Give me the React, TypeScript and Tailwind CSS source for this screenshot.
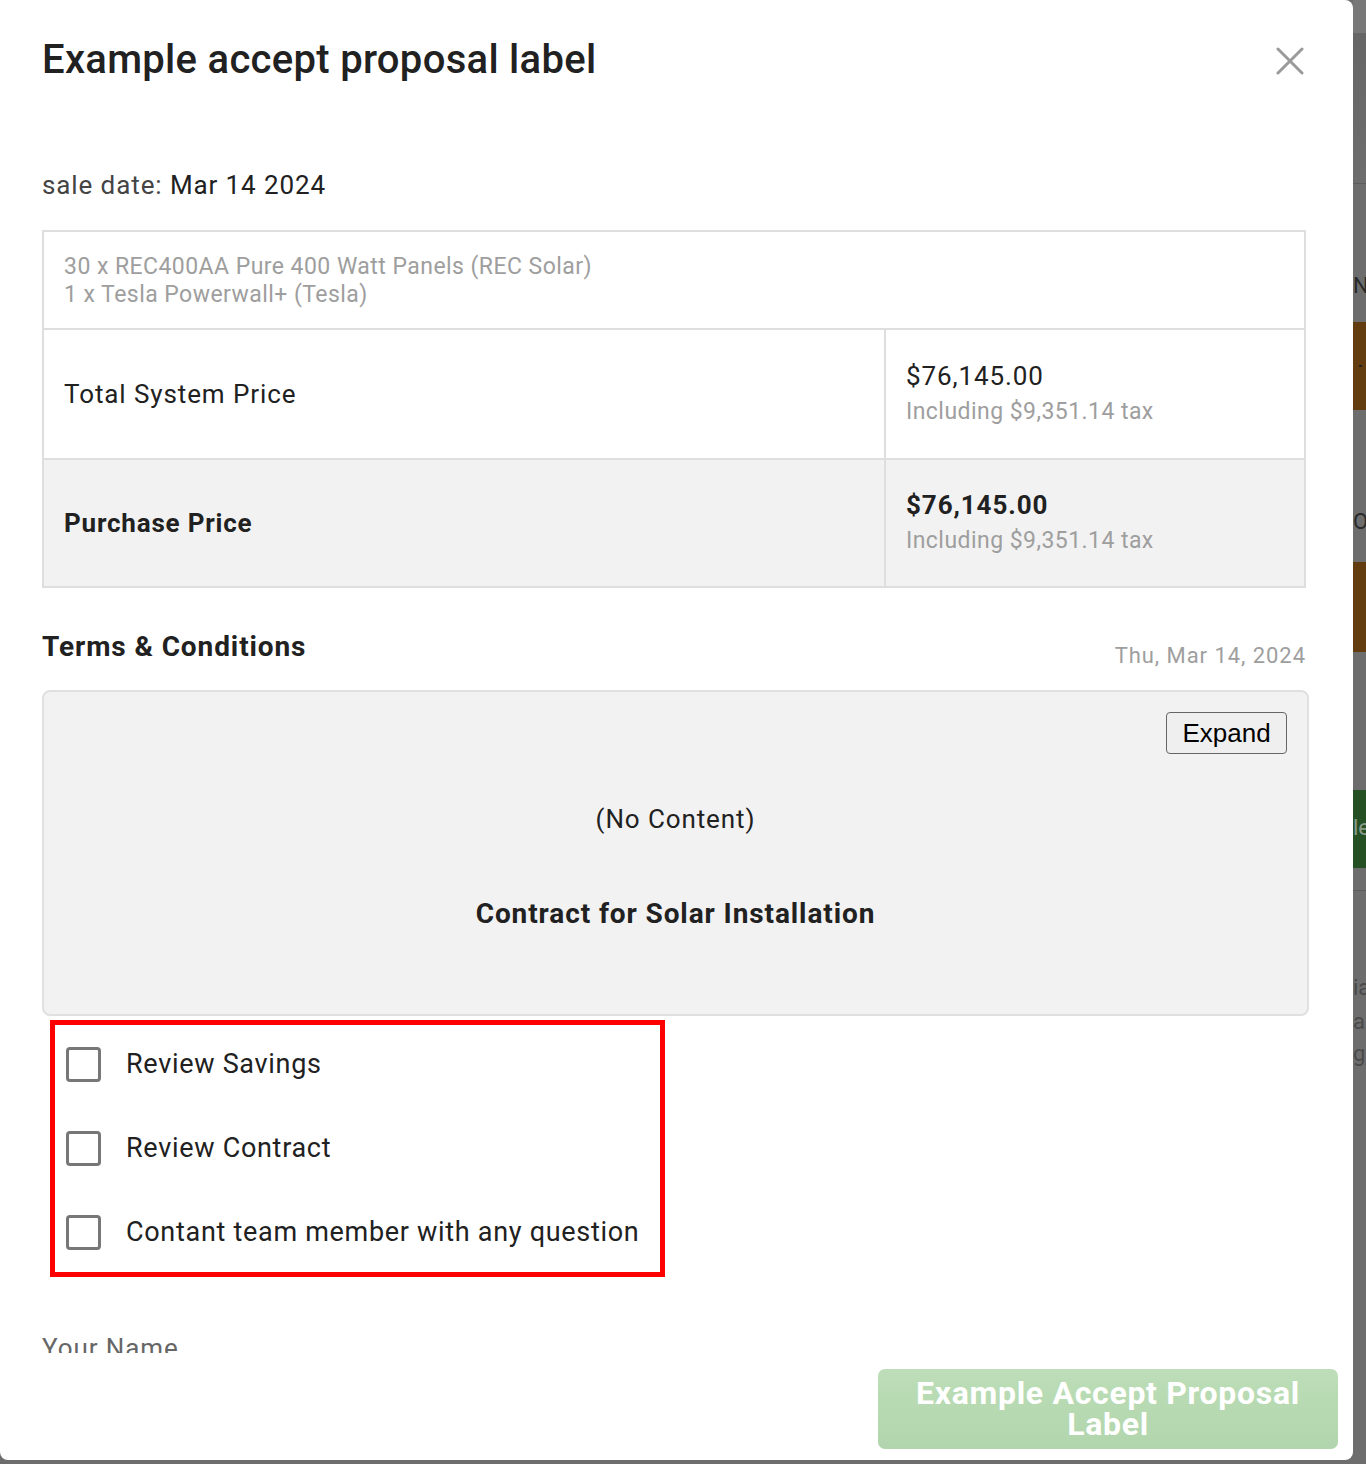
import React from "react";

const items = [
  "30 x REC400AA Pure 400 Watt Panels (REC Solar)",
  "1 x Tesla Powerwall+ (Tesla)",
];

const checks = ["Review Savings", "Review Contract", "Contant team member with any question"];

const PriceCell = ({ bold }: { bold?: boolean }) => (
  <div className="flex flex-col justify-center border-l-2 border-[#dedede] pl-[20px]">
    <div className={`text-[26px] leading-[36px] tracking-[0.9px] text-[#212121] ${bold ? "font-bold" : ""}`}>
      $76,145.00
    </div>
    <div className="text-[23px] leading-[36px] tracking-[0.45px] text-[#9e9e9e]">Including $9,351.14 tax</div>
  </div>
);

const BackgroundStrip = () => (
  <div className="flex w-[13px] flex-col overflow-hidden bg-[#6d6d6d] text-[22px]">
    <div className="h-[33px] bg-[#787878]" />
    <div className="h-[150px] bg-gradient-to-b from-[#666] to-[#6d6d6d]" />
    <div className="h-[1px] bg-[#5c5c5c]" />
    <div className="mt-[88px] h-[28px] whitespace-nowrap leading-[28px] text-[#2a2a2a]">N</div>
    <div className="mt-[22px] flex h-[88px] items-center bg-[#633c0f]">
      <div className="ml-[6px] h-[2px] w-[3px] bg-[#222]" />
    </div>
    <div className="mt-[98px] h-[28px] whitespace-nowrap leading-[28px] text-[#2a2a2a]">O</div>
    <div className="mt-[26px] h-[90px] bg-[#633c0f]" />
    <div className="mt-[138px] h-[78px] whitespace-nowrap bg-[#245024] pt-[24px] leading-[28px] text-[#8a9a8a]">le</div>
    <div className="mt-[22px] h-[1px] bg-[#5c5c5c]" />
    <div className="mt-[80px] whitespace-nowrap leading-[34px] text-[#4a4a4a]">ia</div>
    <div className="whitespace-nowrap leading-[34px] text-[#4a4a4a]">al</div>
    <div className="whitespace-nowrap leading-[30px] text-[#4a4a4a] underline">g</div>
  </div>
);

export default function App() {
  return (
    <div
      className="flex h-[1464px] w-[1366px] overflow-hidden bg-[#6d6d6d]"
      style={{ fontFamily: "Roboto, 'Noto Sans', sans-serif" }}
    >
      <div className="flex h-[1460px] w-[1353px] flex-col rounded-b-[8px] rounded-tr-[8px] bg-white">
        {/* header */}
        <div className="flex h-[120px] shrink-0 justify-between pl-[42px] pr-[49px] pt-[36px]">
          <h1 className="text-[40px] font-medium leading-[48px] tracking-[0.3px] text-[#212121]">
            Example accept proposal label
          </h1>
          <svg className="mt-[11px]" width="28" height="28" viewBox="0 0 28 28">
            <path d="M2 2 L26 26 M26 2 L2 26" stroke="#9a9a9a" strokeWidth="3" strokeLinecap="round" />
          </svg>
        </div>

        {/* body */}
        <div className="min-h-0 flex-1 overflow-hidden pl-[42px] pt-[49px]">
          <div className="text-[26px] leading-[32px] tracking-[0.9px] text-[#444]">
            sale date: <span className="text-[#212121]">Mar 14 2024</span>
          </div>

          <div className="mt-[29px] w-[1264px] border-2 border-[#dedede]">
            <div className="px-[20px] pb-[19px] pt-[21px] text-[23px] leading-[28px] tracking-[0.45px] text-[#9e9e9e]">
              {items.map((it) => (
                <div key={it}>{it}</div>
              ))}
            </div>
            <div className="grid h-[130px] grid-cols-[840px_1fr] border-t-2 border-[#dedede]">
              <div className="flex items-center pl-[20px] text-[26px] tracking-[0.9px] text-[#212121]">
                Total System Price
              </div>
              <PriceCell />
            </div>
            <div className="grid h-[128px] grid-cols-[840px_1fr] border-t-2 border-[#dedede] bg-[#f2f2f2]">
              <div className="flex items-center pl-[20px] text-[26px] font-bold tracking-[0.8px] text-[#212121]">
                Purchase Price
              </div>
              <PriceCell bold />
            </div>
          </div>

          <div className="mt-[42px] flex w-[1264px] items-start justify-between">
            <h2 className="text-[28px] font-bold leading-[34px] tracking-[0.9px] text-[#212121]">Terms &amp; Conditions</h2>
            <span className="mt-[13px] text-[22px] leading-[26px] tracking-[0.95px] text-[#9e9e9e]">Thu, Mar 14, 2024</span>
          </div>

          <div className="mt-[21px] flex h-[326px] w-[1267px] flex-col rounded-[8px] border-2 border-[#e0e0e0] bg-[#f2f2f2] pr-[20px] pt-[20px]">
            <div className="flex justify-end">
              <button
                className="h-[42px] w-[121px] rounded-[4px] border border-[#666] bg-[#efefef] text-[26px] text-black"
                style={{ fontFamily: "'Liberation Sans', Arial, sans-serif" }}
              >
                Expand
              </button>
            </div>
            <div className="mt-[49px] pl-[20px] text-center text-[26px] leading-[32px] tracking-[0.9px] text-[#212121]">
              (No Content)
            </div>
            <div className="mt-[62px] pl-[20px] text-center text-[28px] font-bold leading-[34px] tracking-[0.9px] text-[#212121]">
              Contract for Solar Installation
            </div>
          </div>

          <div className="ml-[8px] mt-[4px] flex w-[615px] flex-col gap-[49px] border-[5px] border-[#ff0000] pb-[22px] pl-[11px] pt-[22px]">
            {checks.map((c) => (
              <label key={c} className="flex h-[35px] items-center gap-[25px]">
                <span className="h-[35px] w-[35px] shrink-0 rounded-[4px] border-[3px] border-[#777]" />
                <span className="whitespace-nowrap text-[27px] tracking-[0.7px] text-[#212121]">{c}</span>
              </label>
            ))}
          </div>

          <div className="mt-[55px] text-[26px] leading-[32px] tracking-[0.9px] text-[#666]">Your Name</div>
        </div>

        {/* footer */}
        <div className="flex h-[107px] shrink-0 justify-end pr-[15px] pt-[16px]">
          <button className="h-[80px] w-[460px] rounded-[7px] bg-gradient-to-b from-[#bddeb8] to-[#b1d5ac] px-[20px] text-[32px] font-bold leading-[31px] tracking-[0.7px] text-white">
            Example Accept Proposal Label
          </button>
        </div>
      </div>
      <BackgroundStrip />
    </div>
  );
}
